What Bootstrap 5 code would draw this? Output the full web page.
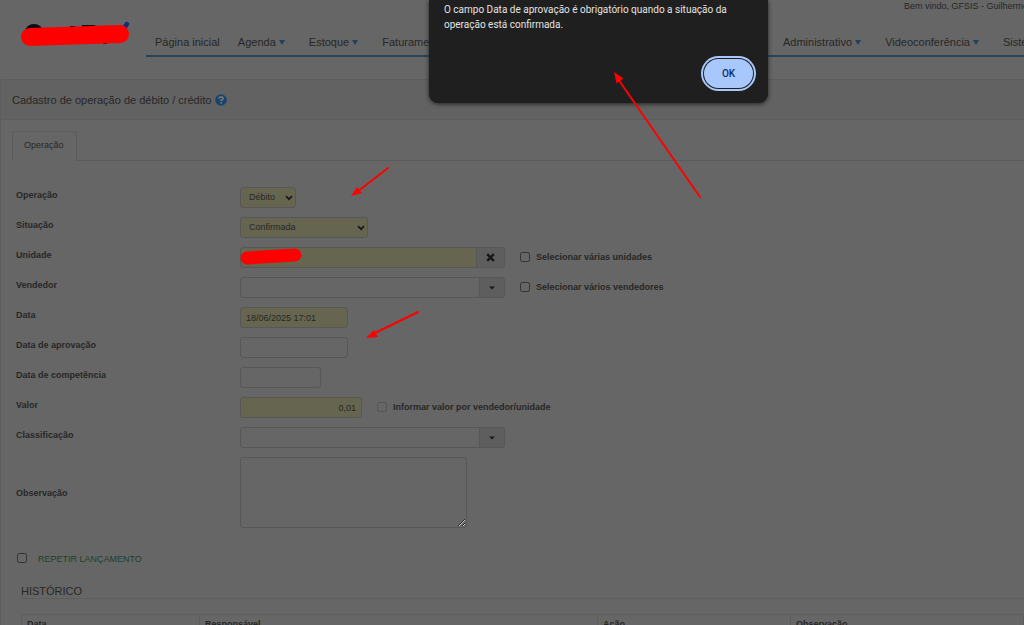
<!DOCTYPE html>
<html lang="pt-BR">
<head>
<meta charset="utf-8">
<meta name="viewport" content="width=device-width, initial-scale=1">
<title>Cadastro de operação de débito / crédito</title>
<link href="https://cdn.jsdelivr.net/npm/bootstrap@5.3.0/dist/css/bootstrap.min.css" rel="stylesheet">
<style>
  :root { --page: #666; --line: #575757; --soft: #5d5d5d; --ink: #272727; --must: #66654f; --addon: #5e5e5e; --red: #f00; }
  body { background: var(--page); color: var(--ink); font: 9px/14px "Liberation Sans", Arial, sans-serif; height: 100vh; overflow: hidden; }
  .site-head { height: 79px; }
  .brand { width: 146px; }
  .welcome { height: 28px; line-height: 13px; padding-left: 758px; }
  .main-menu { border-bottom: 2px solid #294358; height: 29px; }
  .main-menu .nav-link { color: var(--ink); padding: 0 9px; font-size: 11px; line-height: 28px; white-space: nowrap; }
  .menu-start { flex: 0 0 628px; }
  .caret { display: inline-block; border: 3px solid transparent; border-top: 5px solid #1c4263; border-bottom: 0; margin: 0 6px 0 0; vertical-align: 1px; }
  .panel-box { border: 1px solid var(--soft); border-right: 0; border-bottom: 0; border-radius: 3px 0 0 0; }
  .panel-title { background: #626262; border-bottom: 1px solid var(--soft); height: 40px; padding: 0 11px; }
  .panel-title h1 { font-size: 11px; line-height: 16px; font-weight: 400; margin: 0; }
  .nav-tabs { --bs-nav-tabs-border-color: #5b5b5b; --bs-nav-tabs-border-radius: 3px; margin: 11px 0 0 11px; }
  .nav-tabs .nav-link, .nav-tabs .nav-link.active { color: var(--ink); background: var(--page); font-size: 9px; padding: 6px 12px 8px 11px; border-color: #5b5b5b #5b5b5b var(--page); }
  .fields { padding: 26px 0 0 15px; gap: 9px; }
  .field > .name { width: 224px; height: 21px; line-height: 17px; font-weight: 700; flex: none; }
  .field > .name.tall { height: auto; line-height: 14px; align-self: center; }
  .form-control, .form-select { background-color: transparent; border: 1px solid var(--line); border-radius: 3px; color: var(--ink); font-size: 9px; line-height: 13px; padding: 3px 5px; height: 21px; min-height: 0; }
  .form-select { padding: 3px 8px; background-position: right 2px center; background-size: 8px 6px;
    background-image: url("data:image/svg+xml,%3Csvg xmlns='http://www.w3.org/2000/svg' viewBox='0 0 8 6'%3E%3Cpath d='M1 1.2l3 3 3-3' fill='none' stroke='%23181818' stroke-width='1.7'/%3E%3C/svg%3E"); }
  .must { background-color: var(--must); }
  textarea.form-control { width: 227px; height: 71px; resize: both; }
  .w-op { width: 56px; } .w-sit { width: 128px; } .w-date { width: 108px; } .w-comp { width: 81px; } .w-val { width: 122px; }
  .combo { width: 265px; }
  .combo .btn { --bs-btn-padding-x: 0; --bs-btn-padding-y: 0; background: var(--addon); border: 1px solid var(--line); border-radius: 3px; color: #181818; width: 26px; line-height: 1; font-size: 9px; }
  .combo .btn.clear { width: 29px; }
  .form-check-input { width: 10px; height: 10px; margin: 0; background-color: transparent; border: 1px solid #333; border-radius: 2px; float: none; flex: none; }
  .form-check-input:disabled { border-color: #555; opacity: 1; }
  .form-check-input:disabled ~ label { opacity: 1; }
  .option { height: 19px; margin-left: 15px; gap: 6px; font-weight: 700; }
  .repeat { margin: 22px 0 0 16px; gap: 11px; color: #21402a; }
  .repeat label { padding-top: 2px; }
  .history { margin: 18px 0 0 20px; }
  .history h2 { font-size: 11px; line-height: 14px; font-weight: 400; margin: 0 0 15px; border-bottom: 1px solid var(--soft); }
  .history th { padding: 2px 5px; border: 1px solid var(--soft); line-height: 14px; }
  .alert-box { position: absolute; top: 0; left: 429px; width: 339px; height: 103px; background: #1f1f1f; color: #e3e3e3; border-radius: 0 0 9px 9px; padding: 2px 15px 15px; box-shadow: 0 1px 4px #222; font: 10px/15px Roboto, "Open Sans", sans-serif; }
  .alert-box .btn { --bs-btn-padding-y: 0; --bs-btn-padding-x: 0; width: 49px; height: 29px; border: 0; border-radius: 15px; background: #a8c7fa; color: #062e6f; font: 500 10px/29px Roboto, sans-serif; box-shadow: 0 0 0 1px #1f1f1f, 0 0 0 3px #a8c7fa; margin: 0 0 0 auto; }
  .marks { position: absolute; top: 0; left: 0; width: 100%; height: 100%; pointer-events: none; }
</style>
</head>
<body class="position-relative">
<header class="site-head d-flex">
  <a class="brand flex-shrink-0" href="#" aria-label="Início">
    <svg width="146" height="60" aria-hidden="true">
      <path d="M25 32a9 8 0 0 1 18 0M70 32v-6h5v6M82 32v-7h12q4 1 4 7M116 30l1-4h4v4M73 43h8v1h-8zM103 43h4v1h-4z" fill="#0b0b14"/>
      <path d="M121 28l4-5a2 2 0 0 1 4 2l-3 5z" fill="#132d78"/>
    </svg>
  </a>
  <div class="flex-grow-1 overflow-hidden">
    <div class="welcome text-nowrap">Bem vindo, GFSIS - Guilherme</div>
    <nav class="main-menu d-flex">
      <ul class="nav menu-start flex-nowrap">
        <li><a class="nav-link" href="#">Página inicial</a></li>
        <li><a class="nav-link" href="#">Agenda <span class="caret"></span></a></li>
        <li><a class="nav-link" href="#">Estoque <span class="caret"></span></a></li>
        <li><a class="nav-link" href="#">Faturamento</a></li>
      </ul>
      <ul class="nav flex-nowrap">
        <li><a class="nav-link" href="#">Administrativo <span class="caret"></span></a></li>
        <li><a class="nav-link" href="#">Videoconferência <span class="caret"></span></a></li>
        <li><a class="nav-link" href="#">Sistema</a></li>
      </ul>
    </nav>
  </div>
</header>

<main class="panel-box">
  <div class="panel-title d-flex align-items-center gap-1">
    <h1>Cadastro de operação de débito / crédito</h1>
    <svg width="12" height="12" viewBox="0 0 12 12" aria-hidden="true"><circle cx="6" cy="6" r="5.8" fill="#17456e"/><path d="M4.100 4.700c0-2.600 3.900-2.400 3.900-.2C8 5.800 6.100 5.800 6.100 7.200M6.100 8.200v1.500" fill="none" stroke="#777" stroke-width="1.700"/></svg>
  </div>
  <ul class="nav nav-tabs"><li class="nav-item"><a class="nav-link active" href="#">Operação</a></li></ul>

  <form>
    <div class="fields d-flex flex-column">
      <div class="field d-flex"><label class="name" for="op">Operação</label>
        <select id="op" class="form-select must w-op"><option>Débito</option></select></div>
      <div class="field d-flex"><label class="name" for="sit">Situação</label>
        <select id="sit" class="form-select must w-sit"><option>Confirmada</option></select></div>
      <div class="field d-flex"><label class="name" for="uni">Unidade</label>
        <div class="input-group combo flex-nowrap"><input id="uni" class="form-control must" type="text"><button type="button" class="btn clear" aria-label="Limpar"><svg width="9" height="9" viewBox="0 0 9 9"><path d="M1.200 1.200l6.600 6.600M7.800 1.200l-6.600 6.600" stroke="#181818" stroke-width="2.400"/></svg></button></div>
        <div class="option d-flex align-items-center"><input class="form-check-input" type="checkbox" id="vu"><label for="vu">Selecionar várias unidades</label></div></div>
      <div class="field d-flex"><label class="name" for="ven">Vendedor</label>
        <div class="input-group combo flex-nowrap"><input id="ven" class="form-control" type="text"><button type="button" class="btn" aria-label="Abrir lista"><svg width="6" height="4" viewBox="0 0 6 4"><path d="M0 .5h6L3 3.500z" fill="#181818"/></svg></button></div>
        <div class="option d-flex align-items-center"><input class="form-check-input" type="checkbox" id="vv"><label for="vv">Selecionar vários vendedores</label></div></div>
      <div class="field d-flex"><label class="name" for="dt">Data</label><input id="dt" class="form-control must w-date" type="text" value="18/06/2025 17:01"></div>
      <div class="field d-flex"><label class="name" for="ap">Data de aprovação</label><input id="ap" class="form-control w-date" type="text"></div>
      <div class="field d-flex"><label class="name" for="co">Data de competência</label><input id="co" class="form-control w-comp" type="text"></div>
      <div class="field d-flex"><label class="name" for="va">Valor</label><input id="va" class="form-control must w-val text-end" type="text" value="0,01">
        <div class="option d-flex align-items-center"><input class="form-check-input" type="checkbox" id="iv" disabled><label for="iv">Informar valor por vendedor/unidade</label></div></div>
      <div class="field d-flex"><label class="name" for="cl">Classificação</label>
        <div class="input-group combo flex-nowrap"><input id="cl" class="form-control" type="text"><button type="button" class="btn" aria-label="Abrir lista"><svg width="6" height="4" viewBox="0 0 6 4"><path d="M0 .5h6L3 3.500z" fill="#181818"/></svg></button></div></div>
      <div class="field d-flex"><label class="name tall" for="ob">Observação</label><textarea id="ob" class="form-control"></textarea></div>
    </div>
    <div class="repeat d-flex align-items-center"><input class="form-check-input" type="checkbox" id="rep"><label for="rep">REPETIR LANÇAMENTO</label></div>
  </form>

  <section class="history">
    <h2>HISTÓRICO</h2>
    <table class="w-100">
      <colgroup><col style="width:178px"><col style="width:398px"><col style="width:193px"><col></colgroup>
      <thead><tr><th>Data</th><th>Responsável</th><th>Ação</th><th>Observação</th></tr></thead>
    </table>
  </section>
</main>

<div class="alert-box d-flex flex-column justify-content-between" role="alertdialog" aria-describedby="msg">
  <div id="msg">O campo Data de aprovação é obrigatório quando a situação da operação está confirmada.</div>
  <button type="button" class="btn">OK</button>
</div>

<svg class="marks" aria-hidden="true">
  <g fill="none" stroke="#f00" stroke-linecap="round">
    <path d="M30 37l90-3" stroke-width="18"/>
    <path d="M247 258l48-3" stroke-width="13"/>
    <path d="M700 197L618 79M388 168l-31 24M418 312l-45 22" stroke-width="2"/>
  </g>
  <path d="M614 72l9.500 6.500-7 5zM351 196l6-9 5 6zM366 338l8-8 4 7z" fill="#f00"/>
</svg>
<script src="https://cdn.jsdelivr.net/npm/bootstrap@5.3.0/dist/js/bootstrap.bundle.min.js"></script>
</body>
</html>
